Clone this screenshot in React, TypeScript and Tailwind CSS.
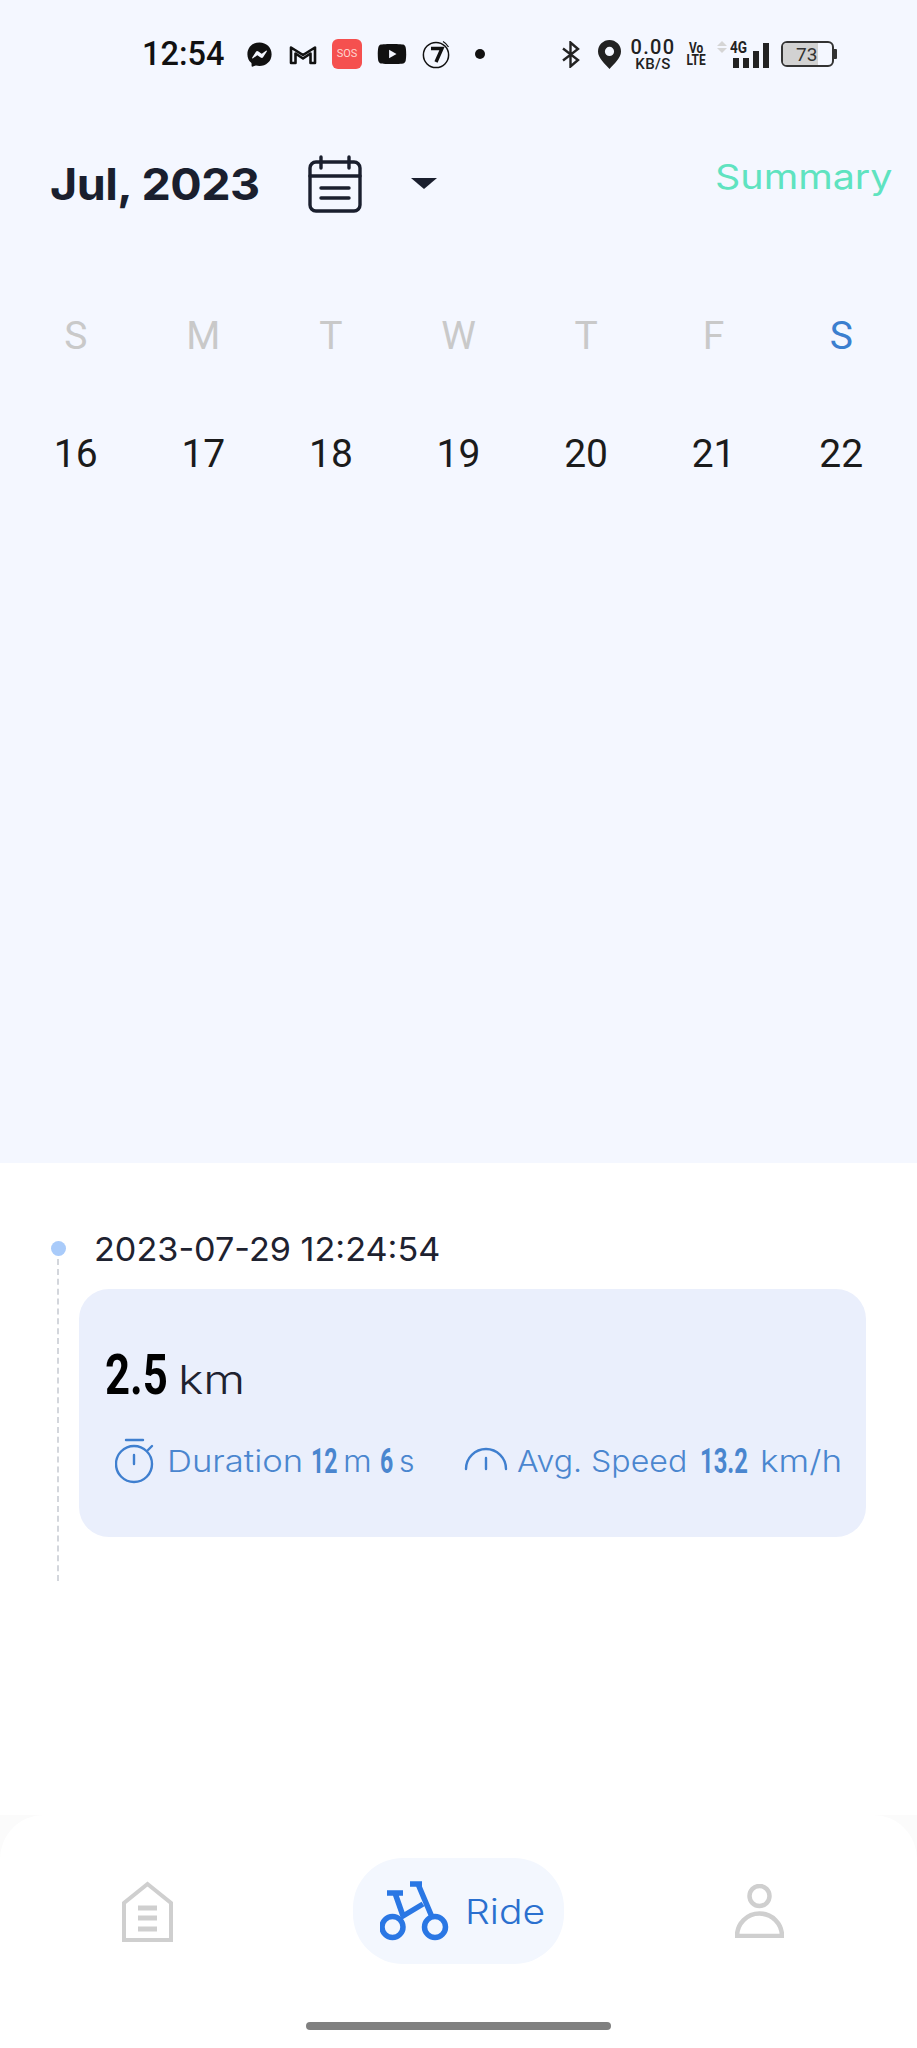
import React from 'react'
import { FaFacebookMessenger, FaYoutube } from 'react-icons/fa'

const wide = "font-['Inter','Open_Sans',sans-serif] origin-left"
const condensed = "font-['Roboto',sans-serif] font-bold origin-left"

const days = [
  { d: 'S', n: '16' },
  { d: 'M', n: '17' },
  { d: 'T', n: '18' },
  { d: 'W', n: '19' },
  { d: 'T', n: '20' },
  { d: 'F', n: '21' },
  { d: 'S', n: '22' },
]

const StatusBar = () => (
  <div className="flex items-center h-[108px] pl-[142px] text-[#111] font-['Roboto',sans-serif]">
    <span className="text-[32.5px] font-medium leading-none w-[82px]">12:54</span>
    <FaFacebookMessenger className="ml-[23px] w-[25px] h-[25px]" />
    <svg className="ml-[17px] w-[28px] h-[21px]" viewBox="0 0 28 21" fill="none" stroke="#111" strokeWidth="2.6" strokeLinejoin="round">
      <path d="M2 19V3.5L14 11 26 3.5V19H21.5V9.5L14 14.5 6.5 9.5V19Z" />
    </svg>
    <div className="ml-[15px] w-[30px] h-[30px] rounded-[6px] bg-[#f5504f] text-[#ffd5d0] text-[11px] flex items-center justify-center">SOS</div>
    <FaYoutube className="ml-[15px] w-[30px] h-[30px]" />
    <svg className="ml-[15px] w-[29px] h-[29px]" viewBox="0 0 29 29" fill="none" stroke="#111">
      <circle cx="14" cy="15" r="12.6" strokeWidth="1.5" />
      <path d="M21 1.5a14 14 0 0 1 5.5 5.5" strokeWidth="1.2" />
      <path d="M9 8.5H20L14 22" strokeWidth="3.4" />
    </svg>
    <div className="ml-[24px] w-[10px] h-[10px] rounded-full bg-[#111]" />

    <svg className="ml-[77px] w-[18px] h-[27px]" viewBox="0 0 18 27" fill="none" stroke="#222" strokeWidth="2.4">
      <path d="M1 7.5L16 19 8.5 25.5V1.5L16 8 1 19.5" />
    </svg>
    <svg className="ml-[18px] w-[23px] h-[29px]" viewBox="0 0 23 29">
      <path fill="#222" fillRule="evenodd" d="M11.5 29C7 24 0 18 0 11.5a11.5 11.5 0 0 1 23 0C23 18 16 24 11.5 29ZM11.5 16a4.6 4.6 0 1 0 0-9.2 4.6 4.6 0 0 0 0 9.2Z" />
    </svg>
    <div className="ml-[10px] w-[44px] flex flex-col items-center text-[#222] font-medium">
      <span className="text-[20px] leading-[20px] tracking-[1.4px]">0.00</span>
      <span className="text-[15px] leading-[14px] tracking-[0.4px]">KB/S</span>
    </div>
    <div className="ml-[12px] w-[18px] flex flex-col items-center text-[#222] font-bold text-[14px] leading-[12px] scale-x-[0.85]">
      <span>Vo</span>
      <span>LTE</span>
    </div>
    <div className="ml-[12px] w-[10px] flex flex-col gap-[2px] mb-[14px]">
      <div className="w-0 h-0 border-x-[5px] border-x-transparent border-b-[5px] border-b-[#d5d5d5]" />
      <div className="w-0 h-0 border-x-[5px] border-x-transparent border-t-[5px] border-t-[#d5d5d5]" />
    </div>
    <div className="ml-[3px] w-[38px] h-[27px] relative">
      <span className="absolute left-0 -top-[2px] text-[17px] leading-none font-bold text-[#222] origin-left scale-x-[0.8]">4G</span>
      <div className="absolute left-[3px] bottom-0 flex items-end gap-[4px]">
        <div className="w-[6px] h-[10px] bg-[#222]" />
        <div className="w-[6px] h-[10px] bg-[#222]" />
        <div className="w-[6px] h-[17px] bg-[#222]" />
        <div className="w-[6px] h-[25px] bg-[#222]" />
      </div>
    </div>
    <div className="ml-[13px] flex items-center">
      <div className="relative w-[53px] h-[26px] rounded-[6px] border-2 border-[#333] overflow-hidden flex items-center">
        <div className="h-full w-[35px] bg-[#d2d2d2]" />
        <span className="absolute left-[13px] text-[19px] leading-none text-[#333]">73</span>
      </div>
      <div className="w-[3px] h-[10px] bg-[#333] rounded-r-[1px]" />
    </div>
  </div>
)

const Header = () => (
  <div className="flex items-center h-[96px] mt-[28px] pl-[50px] text-[#1a1f2e]">
    <span className={`w-[258px] text-[44px] font-bold leading-none tracking-[-0.5px] scale-x-[1.06] ${wide}`}>Jul, 2023</span>
    <svg className="w-[54px] h-[58px]" viewBox="0 0 54 58" fill="none" stroke="#1a1f2e" strokeWidth="3.4" strokeLinecap="round">
      <rect x="2" y="7" width="50" height="49" rx="6" />
      <path d="M2 21H52M13 2V13M41 2V13M13 33H41M13 43H41" />
    </svg>
    <div className="ml-[49px] mb-[2px] w-0 h-0 border-x-[13px] border-x-transparent border-t-[11px] border-t-[#1a1f2e]" />
    <span className={`ml-[278px] -mt-[15px] text-[34px] scale-x-[1.16] text-[#5fe3c0] ${wide}`}>Summary</span>
  </div>
)

const Calendar = () => (
  <div className="grid grid-cols-7 mt-[85px] mx-[12px] font-['Roboto',sans-serif] text-[39px] leading-none text-center">
    {days.map((x, i) => (
      <span key={i} className={`h-[118px] ${i === 6 ? 'text-[#3b7fcf]' : 'text-[#c9c9c9]'}`}>{x.d}</span>
    ))}
    {days.map((x, i) => (
      <span key={i} className="text-[#1b1b1b]">{x.n}</span>
    ))}
  </div>
)

const Ride = () => (
  <div className="relative pt-[73px] pl-[79px]">
    <div className="absolute left-[51px] top-[78px] w-[15px] h-[15px] rounded-full bg-[#a9cbfa]" />
    <div className="absolute left-[57px] top-[96px] h-[322px] border-l-2 border-dashed border-[#d3d6dc]" />
    <div className={`ml-[15px] text-[33px] leading-[26px] scale-x-[1.036] text-[#1e2230] ${wide}`}>2023-07-29 12:24:54</div>
    <div className="mt-[27px] w-[787px] h-[248px] rounded-[30px] bg-[#eaeffc] pt-[56px] pl-[26px]">
      <div className="flex items-baseline">
        <span className={`w-[62px] text-[56px] leading-[60px] font-black scale-x-[0.78] text-black ${condensed}`}>2.5</span>
        <span className={`ml-[11px] text-[40px] scale-x-[1.2] text-[#1e2230] font-light ${wide}`}>km</span>
      </div>
      <div className="flex items-center mt-[28px] ml-[10px] text-[#4a86cf]">
        <svg className="w-[39px] h-[46px]" viewBox="0 0 39 46" fill="none" stroke="#3f7fcf" strokeWidth="2.4" strokeLinecap="round">
          <circle cx="19" cy="26" r="18" />
          <path d="M11 2H28M19 17V26M33 12L37 8" />
        </svg>
        <span className={`ml-[13px] w-[144px] text-[30px] leading-none font-light scale-x-[1.155] ${wide}`}>Duration</span>
        <span className={`w-[32px] text-[35px] leading-none scale-x-[0.66] ${condensed}`}>12</span>
        <span className={`w-[37px] text-[30px] leading-none font-light scale-x-[1.1] ${wide}`}>m</span>
        <span className={`w-[19px] text-[35px] leading-none scale-x-[0.66] ${condensed}`}>6</span>
        <span className={`w-[65px] text-[30px] leading-none font-light ${wide}`}>s</span>
        <svg className="w-[44px] h-[26px] mb-[6px]" viewBox="0 0 44 26" fill="none" stroke="#3f7fcf" strokeWidth="2.4" strokeLinecap="round">
          <path d="M2 24A20 20 0 0 1 42 24M22 13V24" />
        </svg>
        <span className={`ml-[9px] w-[183px] text-[30px] leading-none font-light scale-x-[1.07] ${wide}`}>Avg. Speed</span>
        <span className={`w-[60px] text-[35px] leading-none scale-x-[0.68] ${condensed}`}>13.2</span>
        <span className={`text-[30px] leading-none font-light scale-x-[1.17] ${wide}`}>km/h</span>
      </div>
    </div>
  </div>
)

const NavBar = () => (
  <div className="h-[233px] bg-[#fbfbfb]">
    <div className="relative h-full bg-white rounded-t-[44px] flex flex-col items-center">
      <div className="w-full flex items-center mt-[43px] pl-[122px]">
        <svg className="w-[51px] h-[61px]" viewBox="0 0 51 61" fill="none" stroke="#cfcfcf" strokeWidth="4">
          <path d="M2 59V22L25.5 3 49 22V59Z" />
          <path d="M16 27H35M16 37H35M16 48H35" strokeWidth="5" />
        </svg>
        <div className="ml-[180px] w-[211px] h-[106px] rounded-[50px] bg-[#f3f7fe] flex items-center pl-[27px]">
          <svg className="w-[69px] h-[60px]" viewBox="0 0 69 60" fill="none" stroke="#2a77e4" strokeWidth="5.5">
            <circle cx="12.5" cy="46" r="10.5" />
            <circle cx="55" cy="46" r="10.5" />
            <path d="M7 12H23M15 12L23 35 43 23M30 3H42M38 3L52 36" />
          </svg>
          <span className={`ml-[16px] mt-[2px] text-[34px] leading-none scale-x-[1.15] text-[#2a70cf] font-light ${wide}`}>Ride</span>
        </div>
        <svg className="ml-[171px] w-[49px] h-[54px]" viewBox="0 0 49 54" fill="none" stroke="#cfcfcf" strokeWidth="4.5">
          <circle cx="24.5" cy="12" r="10" />
          <path d="M2 52A22.5 22.5 0 0 1 47 52Z" />
        </svg>
      </div>
      <div className="absolute top-[207px] w-[305px] h-[8px] rounded-full bg-[#808080]" />
    </div>
  </div>
)

export default function App() {
  return (
    <div className="w-[917px] h-[2048px] flex flex-col bg-white overflow-hidden">
      <div className="h-[1163px] bg-[#f4f7ff]">
        <StatusBar />
        <Header />
        <Calendar />
      </div>
      <div className="flex-1">
        <Ride />
      </div>
      <NavBar />
    </div>
  )
}
